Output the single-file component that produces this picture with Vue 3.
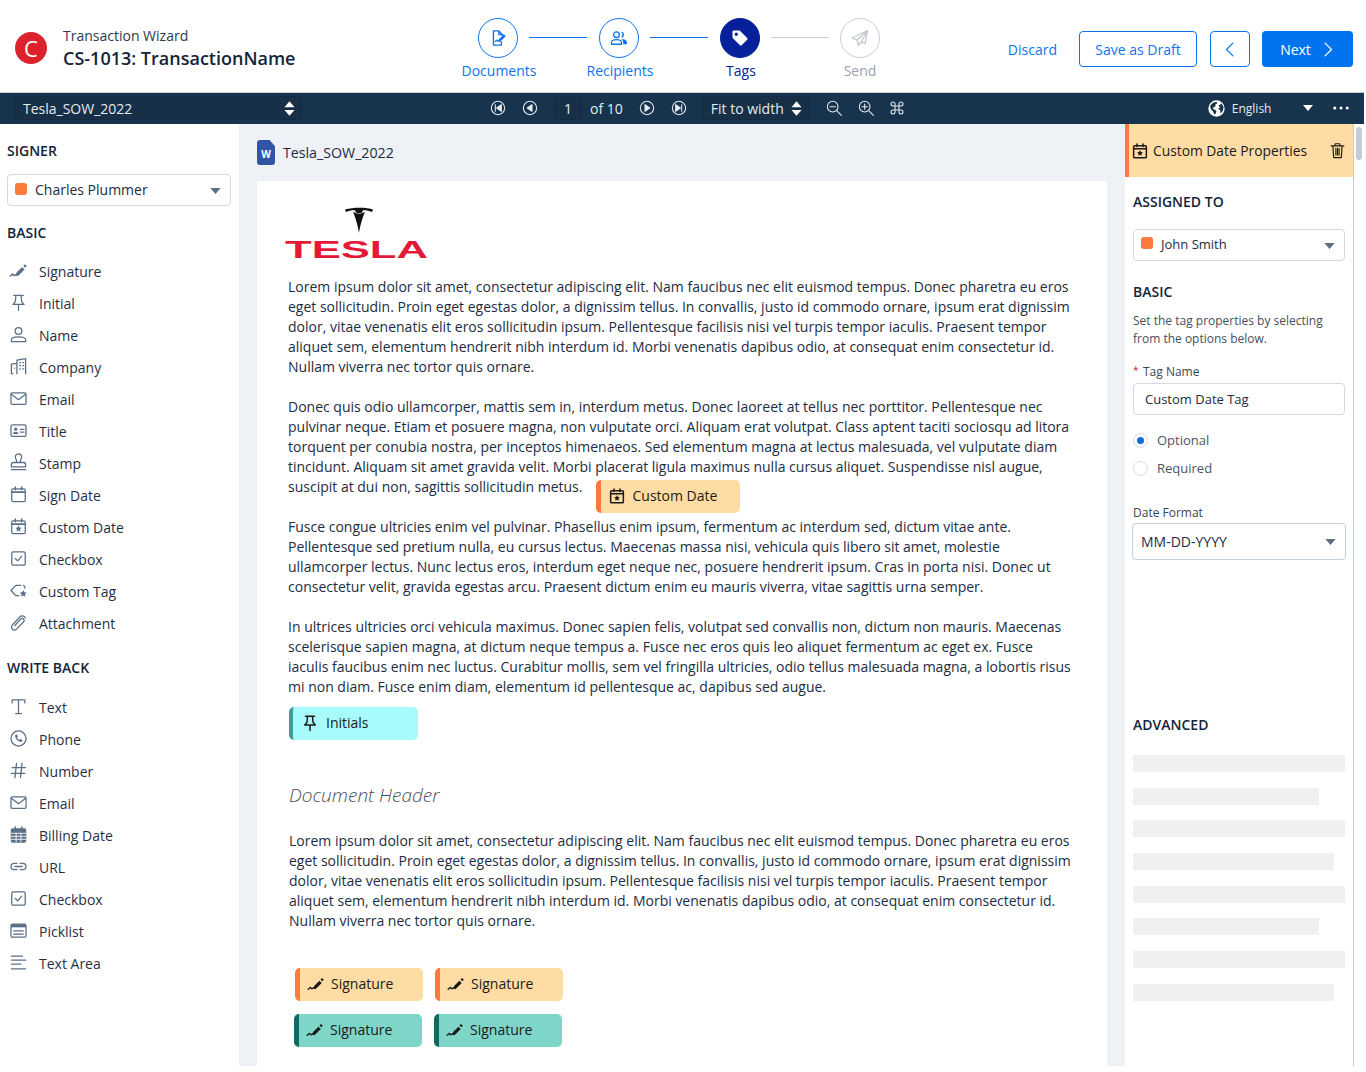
<script setup>
const star = '<path fill="currentColor" stroke="none" d="M12 10.8l1.2 2.5 2.7.4-2 1.9.5 2.7-2.4-1.3-2.4 1.3.5-2.7-2-1.9 2.7-.4z"/>'
const cal = '<rect x="3.5" y="5" width="17" height="16" rx="1.5"/><path d="M3.5 9h17" stroke-width="2"/><path d="M8 2.5V6M16 2.5V6" stroke-width="2"/>'
const sig = '<path d="M1.5 19c1.5 0 2-2.5 3-2.5s1 2 2 2 1.5-1.5 2.5-1.5 1 1 2 1" stroke-width="1.8"/><path fill="currentColor" stroke="none" d="M9.5 14.5l7-7 3.2 3.2-7 7-4.2 1zM18 6l2-2 2.4 2.4-2 2z"/>'

const icons = {
  signature: sig,
  pin: '<path d="M6 3h12M8.7 3L8 11l-3 3.5h14L16 11l-.7-8M12 14.5V22"/>',
  user: '<circle cx="12" cy="7.5" r="4.2"/><path d="M3 21v-2.2c0-2.4 3.2-3.8 9-3.8s9 1.4 9 3.8V21z"/>',
  company: '<path d="M10 21V4l11-2v19M3 21V9l7-1M3 21h2M7 14v.1M13.5 7h1M17.5 7h1M13.5 11h1M17.5 11h1M13.5 15h1M17.5 15h1" />',
  email: '<rect x="2.5" y="5" width="19" height="14.5" rx="1.5"/><path d="M3 6.5l9 7 9-7"/>',
  title: '<rect x="2.5" y="5" width="19" height="14.5" rx="2"/><circle cx="8.5" cy="10.3" r="2" fill="currentColor" stroke="none"/><path fill="currentColor" stroke="none" d="M5 16.5c0-2 2-3 3.5-3s3.5 1 3.5 3z"/><path d="M14.5 10.5H19M14.5 14H19"/>',
  stamp: '<path d="M9.5 12V9.5c0-1.2-1.5-2.3-1.5-4.5a4 4 0 018 0c0 2.2-1.5 3.3-1.5 4.5V12M3 17.5V15c0-1.5 1-3 2.5-3h13c1.5 0 2.5 1.5 2.5 3v2.5zM3 21h18"/>',
  signdate: cal,
  customdate: cal + star,
  checkbox: '<rect x="3.5" y="3.5" width="17" height="17" rx="2"/><path d="M8 12l3 3 5-6"/>',
  customtag: '<path d="M15 5.5H8.5L2.5 12l6 6.5h4M18.5 5.5l1.5 2V9"/><path fill="currentColor" stroke="none" d="M18 11.5l1.4 2.8 3 .4-2.2 2.1.5 3-2.7-1.4-2.7 1.4.5-3-2.2-2.1 3-.4z"/>',
  attachment: '<path d="M20.5 6c-1.5-2.8-4.7-3-6.5-1.2L4.8 14.5c-2 2.1-2 4.6-.5 6s4 1.2 5.6-.5l8.3-8.7c1.1-1.2 1.1-2.7.1-3.7s-2.5-.9-3.6.2L7.5 15.8"/>',
  text: '<path d="M4 7.5v-4h16v4M12 3.5V21M8.5 21h7"/>',
  phone: '<circle cx="12" cy="12" r="9.5"/><path fill="currentColor" stroke="none" d="M7.8 7.5l2.2-.7 1.3 2.9-1.3 1c.7 1.5 1.7 2.5 3.2 3.2l1-1.2 2.9 1.2-.7 2.2c-4.7.5-9.1-3.8-8.6-8.3z"/>',
  number: '<path d="M9.5 3L7.5 21M16.5 3l-2 18M4 8.5h17M3 15.5h17"/>',
  billing: '<rect x="3" y="5" width="18" height="16.5" rx="1.5" fill="currentColor"/><path d="M8 2.5V6M16 2.5V6" stroke-width="2"/><path stroke="#fff" stroke-width="1.1" d="M3 10.5h18M3 14.3h18M3 18h18M9 10.5v11M15 10.5v11"/>',
  url: '<path d="M10 8H6.5a4 4 0 000 8H10M14 8h3.5a4 4 0 010 8H14M7.5 12h9"/>',
  picklist: '<rect x="2.5" y="4" width="19" height="16.5" rx="2"/><path fill="currentColor" stroke="none" d="M2.5 4h19v4h-19z"/><path d="M6 12.5h12M6 16.5h12"/>',
  textarea: '<path d="M3 4h14M3 9h18M3 14h12M3 20h18"/>',
}

const basicItems = [
  ['signature', 'Signature'], ['pin', 'Initial'], ['user', 'Name'], ['company', 'Company'],
  ['email', 'Email'], ['title', 'Title'], ['stamp', 'Stamp'], ['signdate', 'Sign Date'],
  ['customdate', 'Custom Date'], ['checkbox', 'Checkbox'], ['customtag', 'Custom Tag'], ['attachment', 'Attachment'],
]
const writeBackItems = [
  ['text', 'Text'], ['phone', 'Phone'], ['number', 'Number'], ['email', 'Email'],
  ['billing', 'Billing Date'], ['url', 'URL'], ['checkbox', 'Checkbox'], ['picklist', 'Picklist'], ['textarea', 'Text Area'],
]

const steps = [
  { label: 'Documents', state: 'done', svg: '<path d="M13 3.5H6.5v17H16v-4M13 3.5V8h4.5v1.5M13 3.5L17.5 8"/><path d="M8.5 16.5c1-1 1.2-2 2-2s.5 1.5 1.3 1.5" stroke-width="1.3"/><path fill="currentColor" stroke="none" d="M12.5 14l6.5-6.5 2.3 2.3-6.5 6.5-3 .7z"/>' },
  { label: 'Recipients', state: 'done', svg: '<circle cx="9" cy="8" r="3.4"/><path d="M3 19.5v-1.8c0-2 2.5-3.7 6-3.7s6 1.7 6 3.7v1.8z"/><path fill="currentColor" stroke="none" d="M14.5 4.6a3.4 3.4 0 010 6.8 5 5 0 000-6.8zM17 13.5c2.5.3 4.5 1.8 4.5 3.7v2.3H17v-2c0-1.5-.5-3-2-4z"/>' },
  { label: 'Tags', state: 'active', svg: '<path fill="currentColor" stroke="none" fill-rule="evenodd" d="M3 4.5C3 3.7 3.7 3 4.5 3H11c.5 0 .9.2 1.2.5l8.4 8.4c.6.6.6 1.5 0 2.1l-6.6 6.600c-.6.600-1.500.6-2.100 0L3.500 12.200C3.200 11.900 3 11.500 3 11zM7.500 5.500a2 2 0 100 4 2 2 0 000-4z"/>' },
  { label: 'Send', state: 'off', svg: '<path d="M21 3L2.5 12l6 2.5 1.5 6.5 3.5-4.200 4.500 2zM21 3L8.500 14.500M21 3l-7.500 13.800"/>' },
]

const para1 = 'Lorem ipsum dolor sit amet, consectetur adipiscing elit. Nam faucibus nec elit euismod tempus. Donec pharetra eu eros eget sollicitudin. Proin eget egestas dolor, a dignissim tellus. In convallis, justo id commodo ornare, ipsum erat dignissim dolor, vitae venenatis elit eros sollicitudin ipsum. Pellentesque facilisis nisi vel turpis tempor iaculis. Praesent tempor aliquet sem, elementum hendrerit nibh interdum id. Morbi venenatis dapibus odio, at consequat enim consectetur id. Nullam viverra nec tortor quis ornare.'

const advancedBars = [212, 186, 212, 201, 212, 186, 212, 201]
</script>

<template>
  <div class="app">
    <header class="topbar">
      <div class="brand">
        <div class="brand-logo">C</div>
        <div>
          <div class="brand-sub">Transaction Wizard</div>
          <div class="brand-title">CS-1013: TransactionName</div>
        </div>
      </div>

      <div class="stepper">
        <template v-for="(s, i) in steps" :key="s.label">
          <div class="step" :class="s.state">
            <div class="step-circle">
              <svg class="ico step-ico" viewBox="0 0 24 24" v-html="s.svg"></svg>
            </div>
            <div class="step-label">{{ s.label }}</div>
          </div>
          <div v-if="i < steps.length - 1" class="step-line" :class="{ off: i === 2 }"></div>
        </template>
      </div>

      <div class="actions">
        <a class="discard">Discard</a>
        <button class="btn btn-outline">Save as Draft</button>
        <button class="btn btn-outline btn-back">
          <svg class="ico chev" viewBox="0 0 24 24"><path d="M15 4l-8 8 8 8" /></svg>
        </button>
        <button class="btn btn-primary">
          Next
          <svg class="ico chev" viewBox="0 0 24 24"><path d="M9 4l8 8-8 8" /></svg>
        </button>
      </div>
    </header>

    <div class="toolbar">
      <div class="tb-box doc-select">
        <span>Tesla_SOW_2022</span>
        <svg class="sorter" viewBox="0 0 12 16"><path d="M6 0l5.5 6.5H.5zM6 16L.5 9.500h11z" /></svg>
      </div>

      <svg class="ico tb-ico first" viewBox="0 0 24 24"><circle cx="12" cy="12" r="10" /><path d="M8 7v10" /><path fill="currentColor" d="M17 7v10l-7-5z" /></svg>
      <svg class="ico tb-ico prev" viewBox="0 0 24 24"><circle cx="12" cy="12" r="10" /><path fill="currentColor" d="M15 7v10l-7-5z" /></svg>
      <div class="tb-box page-box">1</div>
      <span class="of">of 10</span>
      <svg class="ico tb-ico next" viewBox="0 0 24 24"><circle cx="12" cy="12" r="10" /><path fill="currentColor" d="M9 7v10l7-5z" /></svg>
      <svg class="ico tb-ico last" viewBox="0 0 24 24"><circle cx="12" cy="12" r="10" /><path d="M16 7v10" /><path fill="currentColor" d="M7 7v10l7-5z" /></svg>
      <div class="tb-box fit-box">
        <span>Fit to width</span>
        <svg class="sorter" viewBox="0 0 12 16"><path d="M6 0l5.5 6.5H.5zM6 16L.5 9.500h11z" /></svg>
      </div>
      <svg class="ico tb-ico zoom-out" viewBox="0 0 24 24"><circle cx="10" cy="10" r="8" /><path d="M16 16l7 7M6 10h8" /></svg>
      <svg class="ico tb-ico zoom-in" viewBox="0 0 24 24"><circle cx="10" cy="10" r="8" /><path d="M16 16l7 7M6 10h8M10 6v8" /></svg>
      <svg class="ico tb-ico cmd" viewBox="0 0 24 24"><path d="M9 9V6a3 3 0 10-3 3h12a3 3 0 10-3-3v12a3 3 0 103-3H6a3 3 0 103 3z" /></svg>

      <svg class="globe" viewBox="0 0 24 24">
        <circle cx="12" cy="12" r="11.5" fill="#fff" />
        <path fill="#18334d" d="M3 8l4-4 5-1.500 1 2-3 2.500 1 2-3 1-1 2.500 3 1.500 2 1-1 4-2 1.500-2-4.500-3-3zM15 8l4-3 3 5-1 5-3 4-1-5-3-2 3-1z" />
      </svg>
      <span class="lang">English</span>
      <svg class="tb-caret" viewBox="0 0 12 7"><path d="M0 0h12L6 7z" /></svg>
      <svg class="tb-dots" viewBox="0 0 18 4"><circle cx="2" cy="2" r="1.7" /><circle cx="9" cy="2" r="1.7" /><circle cx="16" cy="2" r="1.7" /></svg>
    </div>

    <div class="body">
      <aside class="sidebar">
        <h3 class="sec first-sec">SIGNER</h3>
        <div class="select signer">
          <span class="dot"></span>
          <span>Charles Plummer</span>
          <svg class="caret" viewBox="0 0 12 7"><path d="M0 0h12L6 7z" /></svg>
        </div>
        <h3 class="sec basic-sec">BASIC</h3>
        <ul class="items basic-list">
          <li v-for="it in basicItems" :key="it[1]">
            <svg class="ico item-ico" viewBox="0 0 24 24" v-html="icons[it[0]]"></svg>
            <span>{{ it[1] }}</span>
          </li>
        </ul>
        <h3 class="sec wb-sec">WRITE BACK</h3>
        <ul class="items wb-list">
          <li v-for="it in writeBackItems" :key="it[1]">
            <svg class="ico item-ico" viewBox="0 0 24 24" v-html="icons[it[0]]"></svg>
            <span>{{ it[1] }}</span>
          </li>
        </ul>
      </aside>

      <main class="center">
        <div class="doc-title">
          <div class="word-icon">W</div>
          <span>Tesla_SOW_2022</span>
        </div>
        <div class="page">
          <svg class="tesla" viewBox="0 0 143 60">
            <path fill="#111" d="M60 2.5C68 .3 82 .3 88 2.5L87 5C84 3.5 80 3 78 3.2L77 5.5 74 6.5 71 5.5 70 3.2C67 3 64 3.5 61 5z" />
            <path fill="#111" d="M68 5c2 .8 4 1.5 6 2 2-.5 4-1.2 6-2-2 4-5 14-6 21-1-7-4-17-6-21z" />
            <text x="0" y="51" textLength="143" lengthAdjust="spacingAndGlyphs" font-family="'Liberation Sans', sans-serif" font-weight="700" font-size="24" fill="#e31937">TESLA</text>
          </svg>

          <p class="para">{{ para1 }}</p>
          <p class="para">Donec quis odio ullamcorper, mattis sem in, interdum metus. Donec laoreet at tellus nec porttitor. Pellentesque nec pulvinar neque. Etiam et posuere magna, non vulputate orci. Aliquam erat volutpat. Class aptent taciti sociosqu ad litora torquent per conubia nostra, per inceptos himenaeos. Sed elementum magna at lectus malesuada, vel vulputate diam tincidunt. Aliquam sit amet gravida velit. Morbi placerat ligula maximus nulla cursus aliquet. Suspendisse nisl augue, suscipit at dui non, sagittis sollicitudin metus.<span class="tag tag-orange tag-inline">
              <svg class="ico tag-ico" viewBox="0 0 24 24" v-html="icons.customdate"></svg>Custom Date</span></p>
          <p class="para">Fusce congue ultricies enim vel pulvinar. Phasellus enim ipsum, fermentum ac interdum sed, dictum vitae ante. Pellentesque sed pretium nulla, eu cursus lectus. Maecenas massa nisi, vehicula quis libero sit amet, molestie ullamcorper lectus. Nunc lectus eros, interdum eget neque nec, posuere hendrerit ipsum. Cras in porta nisi. Donec ut consectetur velit, gravida egestas arcu. Praesent dictum enim eu mauris viverra, vitae sagittis urna semper.</p>
          <p class="para">In ultrices ultricies orci vehicula maximus. Donec sapien felis, volutpat sed convallis non, dictum non mauris. Maecenas scelerisque sapien magna, at dictum neque tempus a. Fusce nec eros quis leo aliquet fermentum ac eget ex. Fusce iaculis faucibus enim nec luctus. Curabitur mollis, sem vel fringilla ultricies, odio tellus malesuada magna, a lobortis risus mi non diam. Fusce enim diam, elementum id pellentesque ac, dapibus sed augue.</p>

          <div class="tag tag-cyan tag-initials">
            <svg class="ico tag-ico" viewBox="0 0 24 24" v-html="icons.pin"></svg>Initials
          </div>

          <h2 class="doc-header">Document Header</h2>
          <p class="para para-last">{{ para1 }}</p>

          <div class="sig-row sig-row-orange">
            <div v-for="n in 2" :key="n" class="tag tag-orange tag-sig">
              <svg class="ico tag-ico" viewBox="0 0 24 24" v-html="icons.signature"></svg>Signature
            </div>
          </div>
          <div class="sig-row sig-row-teal">
            <div v-for="n in 2" :key="n" class="tag tag-teal tag-sig">
              <svg class="ico tag-ico" viewBox="0 0 24 24" v-html="icons.signature"></svg>Signature
            </div>
          </div>
        </div>
      </main>

      <aside class="props">
        <div class="props-head">
          <svg class="ico head-ico" viewBox="0 0 24 24" v-html="icons.customdate"></svg>
          <span>Custom Date Properties</span>
          <svg class="ico trash" viewBox="0 0 24 24"><path d="M3 5.5h18M8.5 5V3.5c0-.6.4-1 1-1h5c.6 0 1 .4 1 1V5M5.5 5.5l1 15.5c0 .6.5 1 1 1h9c.5 0 1-.4 1-1l1-15.5M9.7 9v9.5M12 9v9.5M14.3 9v9.5" /></svg>
        </div>
        <div class="props-body">
          <h3 class="sec assigned">ASSIGNED TO</h3>
          <div class="select assignee">
            <span class="dot"></span>
            <span class="assignee-name">John Smith</span>
            <svg class="caret" viewBox="0 0 12 7"><path d="M0 0h12L6 7z" /></svg>
          </div>
          <h3 class="sec props-basic">BASIC</h3>
          <p class="desc">Set the tag properties by selecting from the options below.</p>
          <label class="field-label tag-name"><span class="req">*</span>Tag Name</label>
          <div class="input">Custom Date Tag</div>
          <div class="radios">
            <div class="radio-row"><span class="radio on"></span>Optional</div>
            <div class="radio-row"><span class="radio"></span>Required</div>
          </div>
          <label class="field-label date-label">Date Format</label>
          <div class="select date-select">
            <span>MM-DD-YYYY</span>
            <svg class="caret" viewBox="0 0 12 7"><path d="M0 0h12L6 7z" /></svg>
          </div>
          <h3 class="sec advanced">ADVANCED</h3>
          <div class="bars">
            <div v-for="(w, i) in advancedBars" :key="i" class="bar" :style="{ width: w + 'px' }"></div>
          </div>
        </div>
      </aside>

      <div class="gutter"><div class="thumb"></div></div>
    </div>
  </div>
</template>

<style scoped>
.app {
  width: 1364px;
  height: 1066px;
  overflow: hidden;
  display: flex;
  flex-direction: column;
  font-family: "Open Sans", sans-serif;
  font-size: 14px;
  color: #1c2d42;
  background: #fff;
}
.ico {
  fill: none;
  stroke: currentColor;
  stroke-width: 1.6;
  stroke-linecap: round;
  stroke-linejoin: round;
  flex: none;
}

/* top bar */
.topbar {
  height: 92px;
  flex: none;
  display: flex;
  align-items: flex-start;
  border-bottom: 1px solid #c9ced4;
  box-sizing: content-box;
}
.brand {
  width: 478px;
  flex: none;
  display: flex;
  align-items: center;
  padding: 26px 0 0 15px;
  box-sizing: border-box;
  gap: 16px;
}
.brand-logo {
  width: 32px;
  height: 32px;
  border-radius: 50%;
  background: #dc232d;
  color: #fff;
  font-size: 22px;
  line-height: 32px;
  text-align: center;
  flex: none;
}
.brand-sub {
  font-size: 14px;
  line-height: 20px;
  color: #2b3a4e;
}
.brand-title {
  font-size: 18px;
  font-weight: 600;
  line-height: 24px;
  color: #14243a;
}
.stepper {
  display: flex;
  padding-top: 18px;
}
.step {
  width: 40px;
  display: flex;
  flex-direction: column;
  align-items: center;
}
.step-circle {
  width: 40px;
  height: 40px;
  box-sizing: border-box;
  border: 1px solid currentColor;
  border-radius: 50%;
  display: flex;
  align-items: center;
  justify-content: center;
}
.step-ico {
  width: 20px;
  height: 20px;
}
.step-label {
  margin-top: 3px;
  padding-left: 2px;
  line-height: 20px;
  white-space: nowrap;
}
.step.done { color: #0e74ee; }
.step.active { color: #06209c; }
.step.active .step-circle { background: #06209c; }
.step.active .step-ico { color: #fff; }
.step.off { color: #9aa3ad; }
.step.off .step-label { padding-left: 0; }
.step.off .step-circle { border-color: #c9cfd6; }
.step.off .step-ico { color: #c3c9d0; }
.step-line {
  width: 58px;
  height: 1px;
  margin: 19px 12px 0 11px;
  background: #0e74ee;
}
.step-line.off {
  margin-right: 11px;
  background: #c9cfd6;
}
.actions {
  margin-left: auto;
  padding: 31px 11px 0 0;
  display: flex;
  align-items: center;
}
.discard {
  color: #0e74ee;
  margin-right: 22px;
}
.btn {
  height: 36px;
  box-sizing: border-box;
  border-radius: 4px;
  font: inherit;
  display: flex;
  align-items: center;
  justify-content: center;
  padding: 0;
}
.btn-outline {
  width: 118px;
  border: 1px solid #0e74ee;
  background: #fff;
  color: #0e74ee;
}
.btn-back {
  width: 40px;
  margin-left: 13px;
}
.btn-primary {
  width: 91px;
  margin-left: 12px;
  border: 0;
  background: #0273ee;
  color: #fff;
  gap: 7px;
  padding-left: 2px;
}
.chev {
  width: 19px;
  height: 19px;
}

/* viewer toolbar */
.toolbar {
  height: 31px;
  box-sizing: border-box;
  flex: none;
  background: #18334d;
  color: #e6ebf0;
  display: flex;
  align-items: center;
  padding: 0 0 1px 15px;
}
.tb-box {
  height: 24px;
  box-sizing: border-box;
  border: 1px solid #142c43;
  background: #172f47;
  display: flex;
  align-items: center;
}
.doc-select {
  width: 287px;
  flex: none;
  padding: 0 6px 0 7px;
  justify-content: space-between;
}
.sorter {
  width: 11px;
  height: 15px;
  fill: #fff;
  flex: none;
}
.tb-ico {
  width: 16px;
  height: 16px;
}
.first { margin-left: 188px; }
.prev { margin-left: 16px; }
.page-box {
  width: 28px;
  margin-left: 16px;
  justify-content: center;
}
.of { margin-left: 8px; }
.next { margin-left: 16px; }
.last { margin-left: 16px; }
.fit-box {
  width: 107px;
  margin-left: 16px;
  padding: 0 7px;
  justify-content: space-between;
}
.zoom-out { margin-left: 16px; }
.zoom-in { margin-left: 16px; }
.cmd { margin-left: 15px; }
.globe {
  width: 17px;
  height: 17px;
  margin-left: 303px;
  flex: none;
}
.lang {
  font-size: 12px;
  margin-left: 7px;
}
.tb-caret {
  width: 10px;
  height: 6px;
  margin-left: 32px;
  fill: #fff;
  flex: none;
}
.tb-dots {
  width: 16px;
  height: 4px;
  margin-left: 20px;
  fill: #fff;
  flex: none;
}

/* layout */
.body {
  flex: 1;
  min-height: 0;
  display: flex;
}

/* sidebar */
.sidebar {
  width: 240px;
  flex: none;
  box-sizing: border-box;
  border-right: 1px solid #edf0f3;
  padding: 0 8px 0 7px;
}
.sec {
  margin: 0;
  font-size: 14px;
  font-weight: 600;
  line-height: 20px;
  color: #14243a;
}
.first-sec { margin-top: 17px; }
.basic-sec { margin-top: 17px; }
.wb-sec { margin-top: 19px; }
.select {
  display: flex;
  align-items: center;
  box-sizing: border-box;
  border: 1px solid #d5dae0;
  border-radius: 4px;
  background: #fff;
}
.signer {
  height: 32px;
  margin-top: 13px;
  padding: 0 9px 2px 7px;
  gap: 8px;
}
.dot {
  width: 12px;
  height: 12px;
  border-radius: 3px;
  background: #fb7a3c;
  flex: none;
}
.caret {
  width: 11px;
  height: 6px;
  margin-left: auto;
  fill: #5d6e80;
  flex: none;
}
.signer .caret {
  margin-top: 4px;
}
.items {
  list-style: none;
  margin: 0;
  padding: 0;
}
.basic-list { margin-top: 12px; }
.wb-list { margin-top: 13px; }
.items li {
  height: 32px;
  display: flex;
  align-items: center;
  color: #1f3046;
}
.item-ico {
  width: 19px;
  height: 19px;
  margin: -2px 11px 0 2px;
  color: #5b6f86;
}

/* document */
.center {
  flex: 1;
  min-width: 0;
  background: #eef1f5;
  padding: 0 18px 0 17px;
}
.doc-title {
  height: 57px;
  display: flex;
  align-items: center;
  font-size: 14.2px;
  gap: 8px;
}
.word-icon {
  width: 18px;
  height: 25px;
  background: #2f55a4;
  border-radius: 3px;
  clip-path: polygon(0 0, 70% 0, 100% 25%, 100% 100%, 0 100%);
  color: #fff;
  font-size: 10px;
  font-weight: 700;
  text-align: center;
  line-height: 29px;
}
.page {
  background: #fff;
  padding: 26px 0 0 31px;
  min-height: 900px;
}
.tesla {
  display: block;
  width: 143px;
  height: 60px;
  margin: 0 0 10px -3px;
}
.para {
  width: 786px;
  margin: 0 0 20px;
  line-height: 20px;
  color: #1c2d42;
}
.tag {
  display: inline-flex;
  align-items: center;
  height: 33px;
  box-sizing: border-box;
  border-radius: 5px;
  padding-bottom: 2px;
  color: #1a1a1a;
  line-height: 20px;
}
.tag-ico {
  width: 18px;
  height: 18px;
  stroke-width: 2;
}
.tag-orange {
  background: #ffdca3;
  border-left: 5px solid #fb7a3c;
}
.tag-teal {
  background: #7ed6c9;
  border-left: 5px solid #12695f;
}
.tag-cyan {
  background: #a7fbfb;
  border-left: 4px solid #3f9c9c;
}
.tag-inline {
  width: 144px;
  padding-left: 7px;
  margin: 3px 0 -16px 14px;
  vertical-align: top;
}
.tag-inline .tag-ico {
  margin-right: 6px;
}
.tag-initials {
  display: flex;
  width: 129px;
  margin: -10px 0 0 1px;
  padding-left: 8px;
}
.tag-initials .tag-ico {
  margin-right: 7px;
}
.doc-header {
  margin: 43px 0 0 1px;
  font-size: 19px;
  font-weight: 300;
  font-style: italic;
  line-height: 24px;
  color: #4a4f57;
}
.para-last {
  margin: 24px 0 0 1px;
}
.sig-row {
  display: flex;
  gap: 12px;
}
.sig-row-orange {
  margin: 37px 0 0 7px;
}
.sig-row-teal {
  margin: 13px 0 0 6px;
}
.tag-sig {
  width: 128px;
  padding-left: 7px;
}
.tag-sig .tag-ico {
  margin-right: 6px;
}

/* properties panel */
.props {
  width: 229px;
  flex: none;
  box-sizing: border-box;
  border-right: 1px solid #c5ccd3;
  background: #fff;
}
.props-head {
  height: 53px;
  box-sizing: border-box;
  background: #ffdca3;
  border-left: 4px solid #fb7a3c;
  display: flex;
  align-items: center;
  padding: 0 7px 0 2px;
  font-size: 13.8px;
  color: #1a1a1a;
}
.head-ico {
  width: 18px;
  height: 18px;
  stroke-width: 2;
  margin-right: 4px;
}
.trash {
  width: 17px;
  height: 17px;
  margin-left: auto;
}
.props-body {
  padding: 0 8px;
}
.assigned { margin-top: 15px; }
.assignee {
  height: 32px;
  margin-top: 17px;
  padding: 0 9px 2px 7px;
}
.assignee .dot {
  margin-top: -3px;
}
.assignee .caret {
  margin-top: 3px;
}
.assignee-name {
  font-size: 13px;
  margin-left: 8px;
}
.props-basic { margin-top: 21px; }
.desc {
  margin: 10px 0 0;
  font-size: 12px;
  line-height: 18px;
  color: #454f5c;
}
.field-label {
  display: block;
  font-size: 12px;
  line-height: 18px;
  color: #3a4654;
}
.tag-name {
  margin-top: 15px;
  position: relative;
  padding-left: 10px;
}
.req {
  position: absolute;
  left: 0;
  top: -2px;
  color: #dc232d;
  font-size: 10px;
}
.input {
  height: 32px;
  box-sizing: border-box;
  margin-top: 2px;
  border: 1px solid #d5dae0;
  border-radius: 4px;
  padding: 0 11px;
  font-size: 13px;
  line-height: 30px;
}
.radios { margin-top: 11px; }
.radio-row {
  height: 28px;
  display: flex;
  align-items: center;
  font-size: 13px;
  color: #4a5563;
  gap: 9px;
}
.radio {
  width: 15px;
  height: 15px;
  box-sizing: border-box;
  border: 1px solid #d5dae0;
  border-radius: 50%;
  background: #fff;
  position: relative;
}
.radio.on::after {
  content: "";
  position: absolute;
  left: 3px;
  top: 3px;
  width: 7px;
  height: 7px;
  border-radius: 50%;
  background: #0a6edb;
}
.date-label { margin-top: 22px; }
.date-select {
  height: 37px;
  margin: 1px -1px 0;
  padding: 0 9px 1px 8px;
  border-color: #c7ced6;
}
.date-select .caret {
  margin-top: 2px;
}
.advanced { margin-top: 155px; }
.bars {
  margin-top: 20px;
  display: flex;
  flex-direction: column;
  gap: 15.7px;
}
.bar {
  height: 17px;
  background: #f0f0f0;
}
.gutter {
  width: 10px;
  flex: none;
  padding: 3px 0 0 2px;
  box-sizing: border-box;
}
.thumb {
  width: 6px;
  height: 33px;
  border-radius: 3px;
  background: #c5ccd3;
}
</style>

<style>
html, body {
  margin: 0;
  background: #fff;
}
</style>
